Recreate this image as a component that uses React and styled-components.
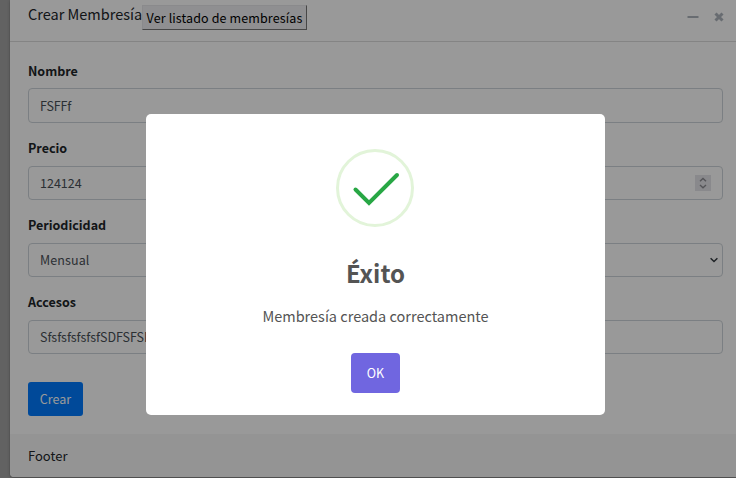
import React from "react";
import styled, { createGlobalStyle } from "styled-components";

const GlobalStyle = createGlobalStyle`
  * { box-sizing: border-box; }
  body { margin: 0; overflow: hidden; font-family: "Noto Sans CJK SC", "Noto Sans", sans-serif; }
`;

const Page = styled.div`
  position: relative;
  width: 736px;
  height: 478px;
  padding-left: 10px;
  overflow: hidden;
  background: #a3a3a3;
`;

const Card = styled.section`
  height: 477px;
  display: flex;
  flex-direction: column;
  background: #fff;
  border-radius: 0 0 0 4px;
  box-shadow: 0 0 1px rgba(0, 0, 0, 0.3), 0 1px 3px rgba(0, 0, 0, 0.25);
`;

const Header = styled.header`
  height: 42px;
  flex: none;
  display: flex;
  align-items: flex-start;
  padding: 0 11px 0 18px;
  border-bottom: 1px solid #dcdcdc;
`;

const Title = styled.h3`
  width: 114px;
  margin: 3px 0 0;
  font-size: 14.5px;
  line-height: 22px;
  font-weight: 400;
  letter-spacing: 0;
  color: #212529;
  white-space: nowrap;
`;

const ListButton = styled.button`
  width: 165px;
  height: 25px;
  margin-top: 5px;
  padding: 1px 0 0;
  border: 1px solid;
  border-color: #e6e6e9 #777 #777 #e6e6e9;
  background: #efeff2;
  color: #000;
  font: 400 12.5px/20px "Noto Sans CJK SC", sans-serif;
  letter-spacing: 0.12px;
  white-space: nowrap;
`;

const Tools = styled.div`
  display: flex;
  gap: 14px;
  margin: 11px 0 0 auto;
`;

const Form = styled.div`
  flex: 1;
  padding: 19px 13px 0 18px;
`;

const Field = styled.div`
  height: ${(p) => (p.$first ? 78 : 77)}px;
`;

const Label = styled.label`
  display: block;
  height: 27px;
  font-size: 12.5px;
  line-height: ${(p) => (p.$first ? 20 : 18)}px;
  font-weight: 700;
  color: #212529;
`;

const Control = styled.div`
  height: ${(p) => (p.$first ? 35 : 34)}px;
  display: flex;
  align-items: center;
  justify-content: space-between;
  padding: 0 ${(p) => p.$end}px 0 11px;
  border: 1px solid #ced4da;
  border-radius: 4px;
  font-size: 12.5px;
  line-height: 20px;
  letter-spacing: ${(p) => p.$spacing}px;
  color: #495057;
  white-space: nowrap;
`;

const Spinner = styled.span`
  width: 16px;
  height: 16px;
  background: #e4e4ea;
  display: flex;
`;

const Button = styled.button`
  display: flex;
  align-items: center;
  justify-content: center;
  border: 0;
  padding: 0;
  border-radius: ${(p) => (p.$primary ? 3 : 4)}px;
  width: ${(p) => (p.$primary ? 55 : 49)}px;
  height: ${(p) => (p.$primary ? 34 : 40)}px;
  margin-top: ${(p) => (p.$primary ? 12 : 25)}px;
  background: ${(p) => (p.$primary ? "#007bff" : "#7066e0")};
  color: #fff;
  font: 400 12.5px/20px "Noto Sans CJK SC", sans-serif;
`;

const Footer = styled.footer`
  height: 43px;
  padding: 12px 18px;
  background: #f7f7f7;
  border-radius: 0 0 0 4px;
  font-size: 13px;
  line-height: 20px;
  color: #212529;
`;

const Overlay = styled.div`
  position: absolute;
  inset: 0;
  padding: 114px 131px 63px 146px;
  background: rgba(0, 0, 0, 0.4);
`;

const Dialog = styled.div`
  height: 301px;
  display: flex;
  flex-direction: column;
  align-items: center;
  padding-top: 34px;
  border-radius: 5px;
  background: #fff;
  color: #545454;
`;

const SuccessIcon = styled.svg`
  flex: none;
  margin-right: 1px;
`;

const DialogTitle = styled.h2`
  margin: 27px 0 0;
  font-size: 24px;
  line-height: 36px;
  font-weight: 700;
`;

const Message = styled.p`
  margin: 13px 0 0;
  font-size: 14.5px;
  line-height: 24px;
  white-space: nowrap;
`;

const fields = [
  { label: "Nombre", value: "FSFFf", spacing: -0.15 },
  { label: "Precio", value: "124124", kind: "number" },
  { label: "Periodicidad", value: "Mensual", kind: "select", spacing: 0.1 },
  { label: "Accesos", value: "SfsfsfsfsfsfSDFSFSDF", spacing: -0.06 },
];

export default function App() {
  return (
    <Page>
      <GlobalStyle />
      <Card>
        <Header>
          <Title>Crear Membresía</Title>
          <ListButton>Ver listado de membresías</ListButton>
          <Tools>
            <svg width="12" height="12"><path d="M0.5 6H11.5" stroke="#adb5bd" strokeWidth="2" /></svg>
            <svg width="12" height="12"><path d="M2.5 2.5L9.5 9.5M9.5 2.5L2.5 9.5" stroke="#adb5bd" strokeWidth="3" /></svg>
          </Tools>
        </Header>
        <Form>
          {fields.map(({ label, value, kind, spacing = 0 }, index) => (
            <Field key={label} $first={index === 0}>
              <Label $first={index === 0}>{label}</Label>
              <Control $first={index === 0} $spacing={spacing} $end={kind === "select" ? 3 : 11}>
                {value}
                {kind === "number" && (
                  <Spinner>
                    <svg width="16" height="16" fill="none" stroke="#8c8c92" strokeWidth="1.4"><path d="M5 6.2L8 3.5L11 6.2M5 10L8 12.7L11 10" /></svg>
                  </Spinner>
                )}
                {kind === "select" && (
                  <svg width="10" height="10" fill="none" stroke="#343a40" strokeWidth="1.5"><path d="M1.6 3.3L5 6.5L8.4 3.3" /></svg>
                )}
              </Control>
            </Field>
          ))}
          <Button $primary>Crear</Button>
        </Form>
        <Footer>Footer</Footer>
      </Card>
      <Overlay>
        <Dialog role="dialog">
          <SuccessIcon width="80" height="80" fill="none">
            <circle cx="40" cy="40" r="37.5" stroke="#e2f4d9" strokeWidth="3" />
            <path d="M20.5 41.5L34 55L62 27" stroke="#28a745" strokeWidth="4" strokeLinecap="round" />
          </SuccessIcon>
          <DialogTitle>Éxito</DialogTitle>
          <Message>Membresía creada correctamente</Message>
          <Button>OK</Button>
        </Dialog>
      </Overlay>
    </Page>
  );
}
